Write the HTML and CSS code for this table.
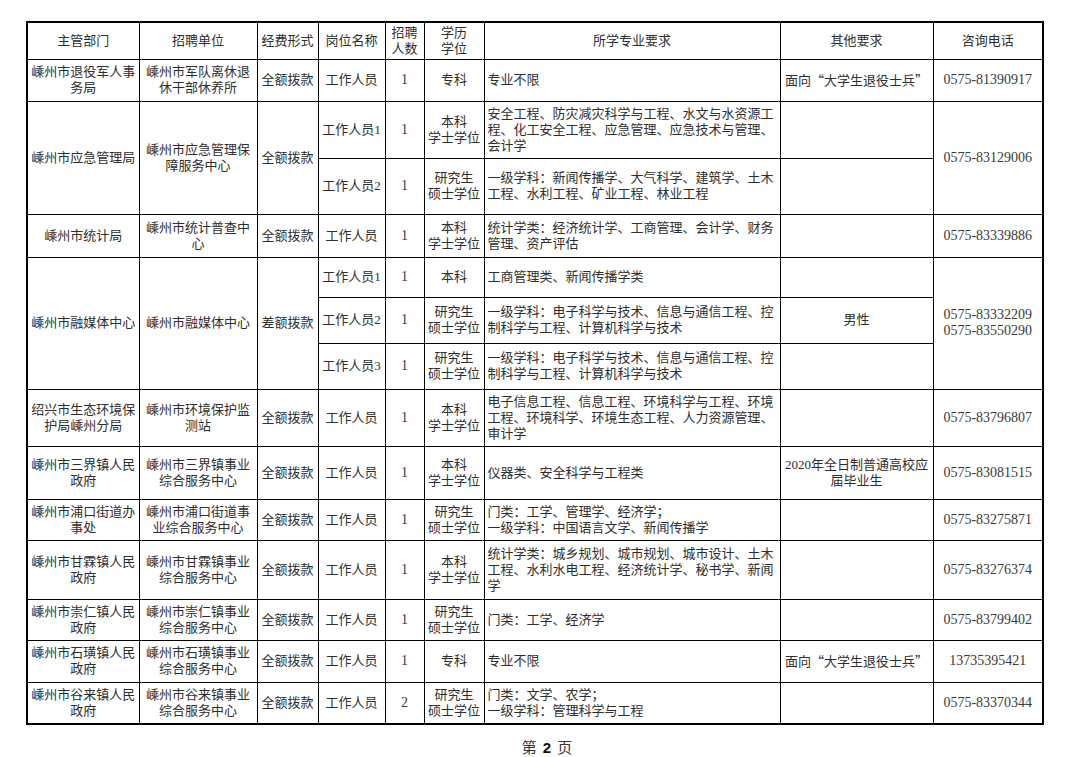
FILE: index.html
```html
<!DOCTYPE html>
<html lang="zh-CN">
<head>
<meta charset="utf-8">
<title>招聘岗位表</title>
<link rel="stylesheet" href="styles.css">
</head>
<body>
<div class="page">
<table class="jobs">
<colgroup>
<col class="c1"><col class="c2"><col class="c3"><col class="c4"><col class="c5"><col class="c6"><col class="c7"><col class="c8"><col class="c9">
</colgroup>
<tr class="h37">
<th>主管部门</th><th>招聘单位</th><th>经费形式</th><th>岗位名称</th><th>招聘<br>人数</th><th>学历<br>学位</th><th>所学专业要求</th><th>其他要求</th><th>咨询电话</th>
</tr>
<tr class="h42">
<td>嵊州市退役军人事务局</td><td>嵊州市军队离休退休干部休养所</td><td>全额拨款</td><td>工作人员</td><td class="num">1</td><td>专科</td><td class="major">专业不限</td><td>面向<span class="oq">“</span>大学生退役士兵<span class="cq">”</span></td><td class="num">0575-81390917</td>
</tr>
<tr class="h57">
<td rowspan="2">嵊州市应急管理局</td><td rowspan="2">嵊州市应急管理保障服务中心</td><td rowspan="2">全额拨款</td><td>工作人员1</td><td class="num">1</td><td>本科<br>学士学位</td><td class="major">安全工程、防灾减灾科学与工程、水文与水资源工程、化工安全工程、应急管理、应急技术与管理、会计学</td><td></td><td rowspan="2" class="num">0575-83129006</td>
</tr>
<tr class="h56">
<td>工作人员2</td><td class="num">1</td><td>研究生<br>硕士学位</td><td class="major">一级学科：新闻传播学、大气科学、建筑学、土木工程、水利工程、矿业工程、林业工程</td><td></td>
</tr>
<tr class="h43">
<td>嵊州市统计局</td><td>嵊州市统计普查中心</td><td>全额拨款</td><td>工作人员</td><td class="num">1</td><td>本科<br>学士学位</td><td class="major">统计学类：经济统计学、工商管理、会计学、财务管理、资产评估</td><td></td><td class="num">0575-83339886</td>
</tr>
<tr class="h40">
<td rowspan="3">嵊州市融媒体中心</td><td rowspan="3">嵊州市融媒体中心</td><td rowspan="3">差额拨款</td><td>工作人员1</td><td class="num">1</td><td>本科</td><td class="major">工商管理类、新闻传播学类</td><td></td><td rowspan="3" class="num">0575-83332209<br>0575-83550290</td>
</tr>
<tr class="h46">
<td>工作人员2</td><td class="num">1</td><td>研究生<br>硕士学位</td><td class="major">一级学科：电子科学与技术、信息与通信工程、控制科学与工程、计算机科学与技术</td><td>男性</td>
</tr>
<tr class="h46">
<td>工作人员3</td><td class="num">1</td><td>研究生<br>硕士学位</td><td class="major">一级学科：电子科学与技术、信息与通信工程、控制科学与工程、计算机科学与技术</td><td></td>
</tr>
<tr class="h57">
<td>绍兴市生态环境保护局嵊州分局</td><td>嵊州市环境保护监测站</td><td>全额拨款</td><td>工作人员</td><td class="num">1</td><td>本科<br>学士学位</td><td class="major">电子信息工程、信息工程、环境科学与工程、环境工程、环境科学、环境生态工程、人力资源管理、审计学</td><td></td><td class="num">0575-83796807</td>
</tr>
<tr class="h53">
<td>嵊州市三界镇人民政府</td><td>嵊州市三界镇事业综合服务中心</td><td>全额拨款</td><td>工作人员</td><td class="num">1</td><td>本科<br>学士学位</td><td class="major">仪器类、安全科学与工程类</td><td>2020年全日制普通高校应届毕业生</td><td class="num">0575-83081515</td>
</tr>
<tr class="h41">
<td>嵊州市浦口街道办事处</td><td>嵊州市浦口街道事业综合服务中心</td><td>全额拨款</td><td>工作人员</td><td class="num">1</td><td>研究生<br>硕士学位</td><td class="major">门类：工学、管理学、经济学；<br>一级学科：中国语言文学、新闻传播学</td><td></td><td class="num">0575-83275871</td>
</tr>
<tr class="h59">
<td>嵊州市甘霖镇人民政府</td><td>嵊州市甘霖镇事业综合服务中心</td><td>全额拨款</td><td>工作人员</td><td class="num">1</td><td>本科<br>学士学位</td><td class="major">统计学类：城乡规划、城市规划、城市设计、土木工程、水利水电工程、经济统计学、秘书学、新闻学</td><td></td><td class="num">0575-83276374</td>
</tr>
<tr class="h41">
<td>嵊州市崇仁镇人民政府</td><td>嵊州市崇仁镇事业综合服务中心</td><td>全额拨款</td><td>工作人员</td><td class="num">1</td><td>研究生<br>硕士学位</td><td class="major">门类：工学、经济学</td><td></td><td class="num">0575-83799402</td>
</tr>
<tr class="h42">
<td>嵊州市石璜镇人民政府</td><td>嵊州市石璜镇事业综合服务中心</td><td>全额拨款</td><td>工作人员</td><td class="num">1</td><td>专科</td><td class="major">专业不限</td><td>面向<span class="oq">“</span>大学生退役士兵<span class="cq">”</span></td><td class="num">13735395421</td>
</tr>
<tr class="h42">
<td>嵊州市谷来镇人民政府</td><td>嵊州市谷来镇事业综合服务中心</td><td>全额拨款</td><td>工作人员</td><td class="num">2</td><td>研究生<br>硕士学位</td><td class="major">门类：文学、农学；<br>一级学科：管理科学与工程</td><td></td><td class="num">0575-83370344</td>
</tr>
</table>
<div class="footer">第<span class="pg">2</span>页</div>
</div>
</body>
</html>
```

FILE: styles.css
```css
html, body {
  margin: 0;
  padding: 0;
  background: #ffffff;
}

.page {
  padding: 21px 0 0 26px;
  font-family: "Liberation Serif", "Noto Sans CJK SC", serif;
  color: #2e2e2e;
}

.jobs {
  border-collapse: collapse;
  table-layout: fixed;
  width: 1016px;
  border: 2px solid #000;
  font-size: 13px;
  line-height: 16px;
}

.c1 { width: 112px; }
.c2 { width: 118px; }
.c3 { width: 61px; }
.c4 { width: 67px; }
.c5 { width: 39px; }
.c6 { width: 60px; }
.c7 { width: 296px; }
.c8 { width: 153px; }
.c9 { width: 110px; }

.jobs th,
.jobs td {
  border: 1px solid #000;
  padding: 0 2px;
  text-align: center;
  vertical-align: middle;
  font-weight: normal;
  word-break: break-all;
}

.jobs td.major {
  text-align: left;
  padding: 0 1px 0 3px;
}

.jobs td.num {
  color: #3a3a3a;
  font-size: 14px;
}

.oq,
.cq {
  display: inline-block;
  width: 1em;
  font-family: "Noto Sans CJK SC", sans-serif;
}

.oq { text-align: right; }
.cq { text-align: left; }

.h37 { height: 37px; }
.h40 { height: 40px; }
.h41 { height: 41px; }
.h42 { height: 42px; }
.h43 { height: 43px; }
.h46 { height: 46px; }
.h53 { height: 53px; }
.h56 { height: 56px; }
.h57 { height: 57px; }
.h59 { height: 59px; }

.footer {
  width: 1016px;
  box-sizing: border-box;
  padding-left: 26px;
  text-align: center;
  margin-top: 13px;
  font-size: 15px;
  line-height: 18px;
  color: #333;
  font-family: "Noto Sans CJK SC", sans-serif;
}

.footer .pg {
  display: inline-block;
  margin: 0 6px;
  font-family: "Liberation Sans", sans-serif;
  font-weight: bold;
  color: #111;
}
```
